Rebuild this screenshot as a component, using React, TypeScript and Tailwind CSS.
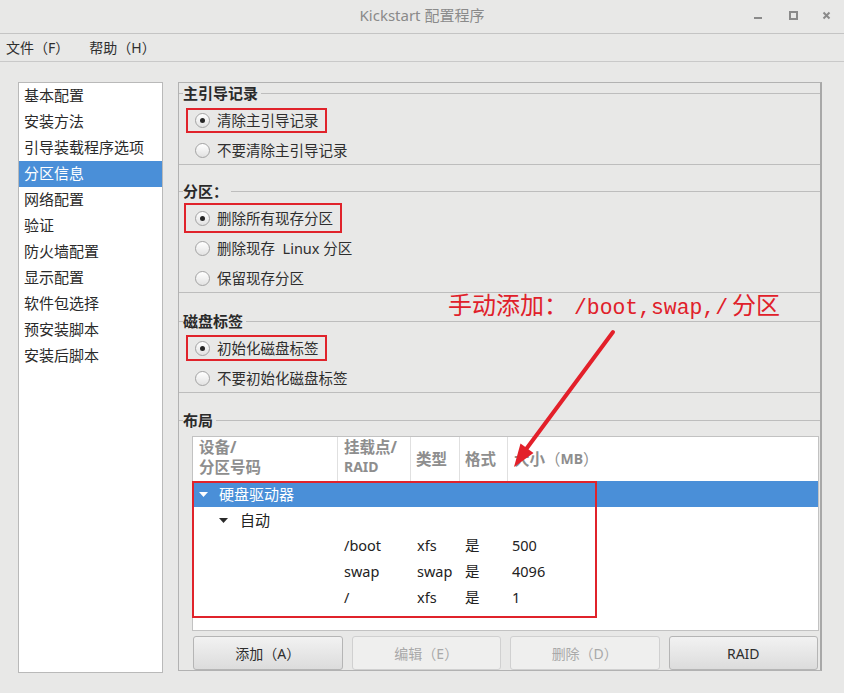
import React from 'react';

const Radio = ({ checked }: { checked?: boolean }) => (
  <span className="inline-flex h-[15px] w-[15px] shrink-0 items-center justify-center rounded-full border border-[#a3a3a3] bg-linear-to-b from-white to-[#e2e2e2]">
    {checked && <span className="h-[5px] w-[5px] rounded-full bg-[#262626]" />}
  </span>
);

const RadioRow = ({ label, checked, box }: { label: React.ReactNode; checked?: boolean; box?: string }) => (
  <div className="relative flex h-[28px] items-center pl-[16px]">
    <Radio checked={checked} />
    <span className="ml-[7px] text-[14.5px] leading-none text-[#2e2e2e]">{label}</span>
    {box && <div className={box} />}
  </div>
);

const Legend = ({ children }: { children: React.ReactNode }) => (
  <legend className="ml-[4px] pr-[3px] text-[15px] font-bold leading-[20px] text-[#2a2a2a]">{children}</legend>
);

const Tri = () => (
  <svg width="9" height="5" viewBox="0 0 9 5" className="shrink-0">
    <polygon points="0,0 9,0 4.5,5" fill="currentColor" />
  </svg>
);

const navItems = ['基本配置', '安装方法', '引导装载程序选项', '分区信息', '网络配置', '验证', '防火墙配置', '显示配置', '软件包选择', '预安装脚本', '安装后脚本'];

const rows = [
  ['/boot', 'xfs', '是', '500'],
  ['swap', 'swap', '是', '4096'],
  ['/', 'xfs', '是', '1'],
];

export default function App() {
  return (
    <div className="relative h-[693px] w-[844px] overflow-hidden bg-[#e8e8e7] font-['Noto_Sans','Noto_Sans_CJK_SC',sans-serif] text-[#2e2e2e]">
      {/* title bar */}
      <div className="grid h-[34px] grid-cols-[1fr_auto_1fr] items-center border-b border-[#c4c4c4]">
        <div />
        <div className="mb-[3px] text-[15px] leading-none text-[#8a8a8a]">Kickstart 配置程序</div>
        <div className="flex justify-end pr-[12px]">
          <svg width="80" height="33" viewBox="0 0 80 33">
            <rect x="2" y="17" width="8" height="2" fill="#8a8a8a" />
            <rect x="38" y="12" width="7" height="7" fill="none" stroke="#8a8a8a" strokeWidth="2" />
            <path d="M71.5 12.5 L77.5 18.5 M77.5 12.5 L71.5 18.5" stroke="#8a8a8a" strokeWidth="2" />
          </svg>
        </div>
      </div>
      {/* menu bar */}
      <div className="flex h-[28px] items-center gap-[20px] border-b border-[#c9c9c9] pb-[1px] pl-[6px] text-[14px] text-[#2e2e2e]">
        <span>文件（F）</span>
        <span>帮助（H）</span>
      </div>
      {/* body */}
      <div className="flex pl-[18px] pt-[20px]">
        <div className="h-[591px] w-[145px] border border-[#b9b9b9] bg-white">
          {navItems.map((n) => (
            <div
              key={n}
              className={
                n === '分区信息'
                  ? 'flex h-[26px] items-center bg-[#4a8fd8] pb-[2px] pl-[5px] text-[15px] text-white'
                  : 'flex h-[26px] items-center pb-[2px] pl-[5px] text-[15px] text-[#2a2a2a]'
              }
            >
              {n}
            </div>
          ))}
        </div>
        <div className="ml-[15px] flex h-[589px] w-[644px] flex-col border border-r-2 border-[#b2b2b2] border-r-[#a8a8a8]">
          <fieldset className="border-y border-[#bdbdbd]">
            <Legend>主引导记录</Legend>
            <div className="flex flex-col gap-[2px] pt-[3px]">
              <RadioRow label="清除主引导记录" checked box="absolute left-[7px] top-[2px] h-[25px] w-[141px] border-2 border-[#e0232b]" />
              <RadioRow label="不要清除主引导记录" />
            </div>
          </fieldset>
          <fieldset className="mt-[16px] border-y border-[#bdbdbd]">
            <Legend>分区：</Legend>
            <div className="flex flex-col gap-[2px] pt-[3px]">
              <RadioRow label="删除所有现存分区" checked box="absolute left-[5px] top-[-1px] h-[30px] w-[158px] border-2 border-[#e0232b]" />
              <RadioRow label={<>删除现存&nbsp;&nbsp;Linux 分区</>} />
              <RadioRow label="保留现存分区" />
            </div>
          </fieldset>
          <fieldset className="mt-[18px] border-y border-[#bdbdbd]">
            <Legend>磁盘标签</Legend>
            <div className="flex flex-col gap-[2px] pt-[3px]">
              <RadioRow label="初始化磁盘标签" checked box="absolute left-[7px] top-[1px] h-[26px] w-[141px] border-2 border-[#e0232b]" />
              <RadioRow label="不要初始化磁盘标签" />
            </div>
          </fieldset>
          <fieldset className="mt-[17px] flex-1 border-t border-[#bdbdbd]">
            <Legend>布局</Legend>
            <div className="relative ml-[13px] mr-[1px] mt-[6px] h-[195px] border border-[#c2c2c2] bg-white">
              <div className="grid h-[44px] grid-cols-[145px_73px_49px_48px_1fr] text-[15.5px] font-bold leading-[20px] text-[#8e8e8e]">
                <div className="border-r border-[#e0e0e0] pl-[6px]">
                  <div>设备/</div>
                  <div>分区号码</div>
                </div>
                <div className="border-r border-[#e0e0e0] pl-[6px]">
                  <div>挂载点/</div>
                  <div className="text-[14px]">RAID</div>
                </div>
                <div className="flex items-center border-r border-[#e0e0e0] pl-[5px]">类型</div>
                <div className="flex items-center border-r border-[#e0e0e0] pl-[5px]">格式</div>
                <div className="flex items-center pl-[6px]">
                  大小<span className="font-normal">（</span>
                  <span className="text-[14px]">MB</span>
                  <span className="font-normal">）</span>
                </div>
              </div>
              <div className="flex h-[26px] items-center bg-[#4a8fd8] pl-[6px] text-[15px] text-white">
                <Tri />
                <span className="ml-[11px]">硬盘驱动器</span>
              </div>
              <div className="flex h-[26px] items-center pl-[26px] text-[15px] text-[#222]">
                <span className="text-[#2a2a2a]">
                  <Tri />
                </span>
                <span className="ml-[12px]">自动</span>
              </div>
              {rows.map((r) => (
                <div key={r[0]} className="grid h-[26px] grid-cols-[145px_73px_49px_48px_1fr] items-center text-[14.5px] text-[#222]">
                  <div />
                  <div className="pl-[6px]">{r[0]}</div>
                  <div className="pl-[6px]">{r[1]}</div>
                  <div className="pl-[5px]">{r[2]}</div>
                  <div className="pl-[4px]">{r[3]}</div>
                </div>
              ))}
              <div className="absolute left-[-1px] top-[44px] h-[137px] w-[405px] border-2 border-[#e0232b]" />
            </div>
            <div className="ml-[14px] mr-[2px] mt-[5px] grid h-[34px] grid-cols-4 gap-[9px] text-[14px]">
              <button className="rounded-[3px] border border-[#b5b5b5] bg-linear-to-b from-[#f2f2f2] to-[#dcdcdc] text-[#2e2e2e]">添加（A）</button>
              <button className="rounded-[3px] border border-[#d0d0d0] bg-[#efefee] text-[#a9a9a9]">编辑（E）</button>
              <button className="rounded-[3px] border border-[#d0d0d0] bg-[#efefee] text-[#a9a9a9]">删除（D）</button>
              <button className="rounded-[3px] border border-[#b5b5b5] bg-linear-to-b from-[#f2f2f2] to-[#dcdcdc] text-[#2e2e2e]">RAID</button>
            </div>
          </fieldset>
        </div>
      </div>
      {/* annotation */}
      <div className="absolute left-[448px] top-[293px] flex items-baseline whitespace-nowrap leading-none text-[#e0202a]">
        <span className="text-[24px]">手动添加：</span>
        <span className="ml-[6px] font-['Liberation_Mono',monospace] text-[21.4px]">/boot,swap,/</span>
        <span className="ml-[4px] text-[24px]">分区</span>
      </div>
      <svg className="absolute left-0 top-0" width="844" height="693" viewBox="0 0 844 693">
        <line x1="613" y1="332" x2="524" y2="452" stroke="#e3202a" strokeWidth="4" strokeLinecap="round" />
        <polygon points="514,467 533.5,453 520.5,443.5" fill="#e3202a" />
      </svg>
    </div>
  );
}
